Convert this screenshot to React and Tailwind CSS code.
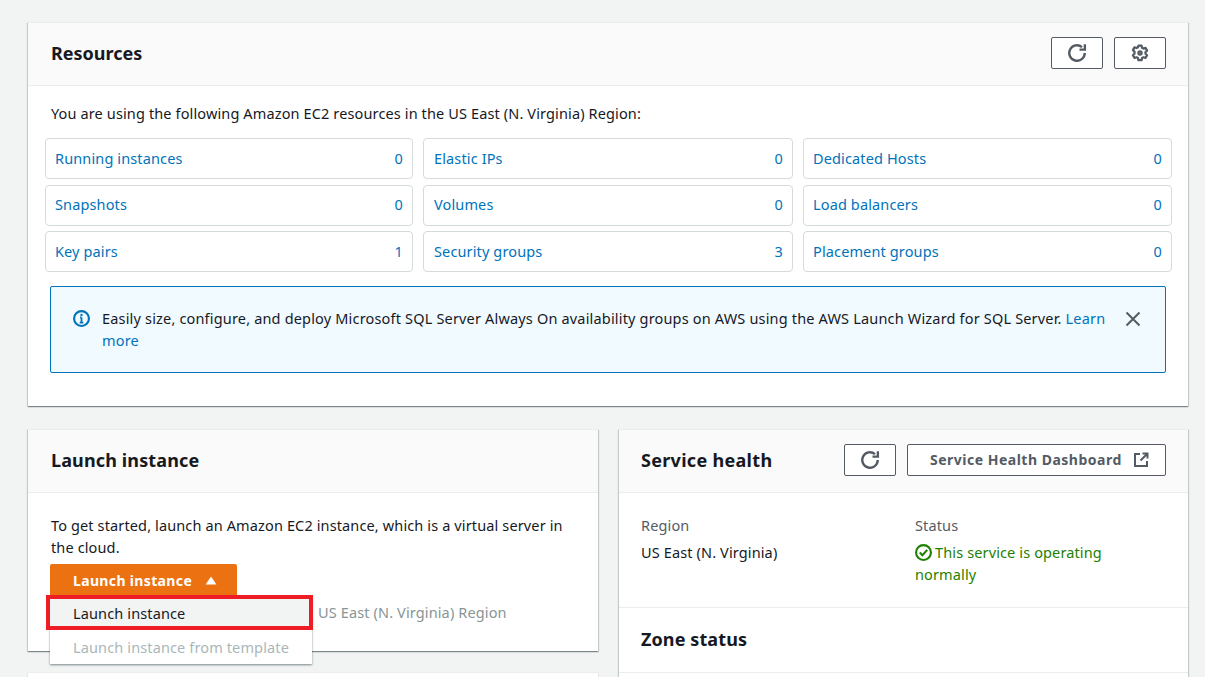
import React from "react";

const resources = [
  ["Running instances", 0],
  ["Elastic IPs", 0],
  ["Dedicated Hosts", 0],
  ["Snapshots", 0],
  ["Volumes", 0],
  ["Load balancers", 0],
  ["Key pairs", 1],
  ["Security groups", 3],
  ["Placement groups", 0],
];

const RefreshIcon = () => (
  <svg viewBox="0 0 16 16" className="w-[20px] h-[20px]" fill="none" stroke="#545b64" strokeWidth="1.9">
    <path d="M14.2 8a6.2 6.2 0 1 1-2.2-4.75" />
    <path d="M14.3 1v4.3H10" />
  </svg>
);

const GearIcon = () => (
  <svg viewBox="0 0 16 16" className="w-[18px] h-[18px]" fill="none" stroke="#545b64" strokeWidth="2" strokeLinejoin="round">
    <path d="M6.6 1.5h2.8l.4 1.9 1.3.7 1.8-.6 1.4 2.4-1.4 1.3v1.5l1.4 1.3-1.4 2.4-1.8-.6-1.3.7-.4 1.9H6.6l-.4-1.9-1.3-.7-1.8.6-1.4-2.4 1.4-1.3V6.7L1.7 5.4l1.4-2.4 1.8.6 1.3-.7z" />
    <circle cx="8" cy="8" r="1.4" />
  </svg>
);

const IconButton = ({ children }) => (
  <button className="w-[52px] h-[32px] flex items-center justify-center bg-white border border-[#545b64] rounded-[2px]">
    {children}
  </button>
);

const App = () => {
  return (
    <div
      className="h-[677px] overflow-hidden bg-[#f2f3f3] pt-[22px] pl-[28px] pr-[17px] text-[14.5px] tracking-[0.13px] leading-[22px] text-[#16191f]"
      style={{ fontFamily: '"Noto Sans", sans-serif' }}
    >
      {/* Resources */}
      <div className="h-[384px] bg-white border-t border-[#eaeded] shadow-[0_1px_1px_0_rgba(0,28,36,0.3),1px_1px_1px_0_rgba(0,28,36,0.15),-1px_1px_1px_0_rgba(0,28,36,0.15)]">
        <div className="h-[63px] bg-[#fafafa] border-b border-[#eaeded] flex items-center justify-between pl-[23px] pr-[22px] pb-[2px]">
          <h2 className="text-[18px] tracking-normal font-bold leading-[22px]">Resources</h2>
          <div className="flex gap-[11px]">
            <IconButton><RefreshIcon /></IconButton>
            <IconButton><GearIcon /></IconButton>
          </div>
        </div>
        <div className="pt-[16px]">
          <p className="pl-[23px]">You are using the following Amazon EC2 resources in the US East (N. Virginia) Region:</p>
          <div className="grid grid-cols-[368px_370px_369px] gap-x-[10px] gap-y-[5.5px] mt-[14px] ml-[17px]">
            {resources.map(([label, count], i) => (
              <div
                key={label}
                className={`h-[41px] bg-white border border-[#d5dbdb] rounded-[4px] flex items-center justify-between pr-[9px] pb-[2px] ${
                  i % 3 === 1 ? "pl-[10px]" : "pl-[9px]"
                }`}
              >
                <a className="text-[#0073bb]">{label}</a>
                <span className="text-[#0073bb]">{count}</span>
              </div>
            ))}
          </div>
          <div className="mt-[14px] ml-[22px] w-[1116px] h-[87px] bg-[#f1faff] border border-[#0073bb] rounded-[2px] flex pl-[22px] pt-[20px]">
            <svg viewBox="0 0 16 16" className="w-[17px] h-[17px] mt-[3px] shrink-0" fill="none">
              <circle cx="8" cy="8" r="7" stroke="#0073bb" strokeWidth="2" />
              <path d="M8 7v4.5M6.3 11.8h3.4M6.6 7h1.4" stroke="#0073bb" strokeWidth="1.7" />
              <circle cx="8" cy="4.6" r="1.1" fill="#0073bb" />
            </svg>
            <p className="ml-[12px] w-[1005px] shrink-0 tracking-[0.175px]">
              Easily size, configure, and deploy Microsoft SQL Server Always On availability groups on AWS using the AWS Launch Wizard for SQL Server.{" "}
              <a className="text-[#0073bb]">Learn more</a>
            </p>
            <svg viewBox="0 0 16 16" className="w-[16px] h-[16px] mt-[4px] ml-[18px] shrink-0" fill="none" stroke="#545b64" strokeWidth="2">
              <path d="M1.5 1.5l13 13M14.5 1.5l-13 13" />
            </svg>
          </div>
        </div>
      </div>

      <div className="grid grid-cols-[570px_569px] gap-x-[21px] mt-[23px]">
        <div>
          {/* Launch instance */}
          <div className="relative h-[222px] bg-white border-t border-[#eaeded] shadow-[0_1px_1px_0_rgba(0,28,36,0.3),1px_1px_1px_0_rgba(0,28,36,0.15),-1px_1px_1px_0_rgba(0,28,36,0.15)]">
            <div className="h-[63px] bg-[#fafafa] border-b border-[#eaeded] flex items-center pl-[23px] pb-[2px]">
              <h2 className="text-[18px] tracking-[0.13px] font-bold leading-[22px]">Launch instance</h2>
            </div>
            <div className="pt-[21px] px-[23px]">
              <p className="w-[530px]">To get started, launch an Amazon EC2 instance, which is a virtual server in the cloud.</p>
              <button className="mt-[6px] -ml-px w-[187px] h-[33px] bg-[#ec7211] rounded-[2px] text-white font-bold text-[14px] tracking-[0.35px] flex items-center pl-[23px] gap-[13px]">
                Launch instance
                <svg viewBox="0 0 12 10" className="w-[12px] h-[9px]" fill="#fff">
                  <path d="M6 0.5L12 9.5H0z" />
                </svg>
              </button>
              <p className="mt-[4px] ml-[267px] text-[#879596]">US East (N. Virginia) Region</p>
            </div>
            <div className="absolute left-[22px] top-[166px] w-[262px] bg-white shadow-[0_1px_2px_0_rgba(0,28,36,0.5)]">
              <div className="h-[34px] bg-[#f2f3f3] flex items-center pl-[23px]">Launch instance</div>
              <div className="h-[34px] flex items-center pl-[23px] text-[#aab7b8]">Launch instance from template</div>
            </div>
            {/* red highlight drawn over the screenshot */}
            <div className="absolute left-[18px] top-[165px] w-[267px] h-[35px] border-[4px] border-[#ee1c25]" />
          </div>
          <div className="mt-[21px] h-[40px] bg-white border-t border-[#eaeded] shadow-[0_1px_1px_0_rgba(0,28,36,0.3)]" />
        </div>

        {/* Service health */}
        <div className="h-[300px] bg-white border-t border-[#eaeded] shadow-[0_1px_1px_0_rgba(0,28,36,0.3),1px_1px_1px_0_rgba(0,28,36,0.15),-1px_1px_1px_0_rgba(0,28,36,0.15)]">
          <div className="h-[63px] bg-[#fafafa] border-b border-[#eaeded] flex items-center justify-between pl-[22px] pr-[22px] pb-[2px]">
            <h2 className="text-[18px] tracking-[0.3px] font-bold leading-[22px]">Service health</h2>
            <div className="flex gap-[11px]">
              <IconButton><RefreshIcon /></IconButton>
              <button className="w-[259px] h-[32px] bg-white border border-[#545b64] rounded-[2px] flex items-center pl-[22px] gap-[11px] text-[#545b64] font-bold text-[14px] tracking-[0.5px]">
                Service Health Dashboard
                <svg viewBox="0 0 16 16" className="w-[16px] h-[16px]" fill="none" stroke="#545b64" strokeWidth="2">
                  <path d="M7 2H2v12h12V9M9.5 1.5h5v5M14.5 1.5L7.5 8.5" />
                </svg>
              </button>
            </div>
          </div>
          <div className="grid grid-cols-[274px_1fr] pt-[21px] pl-[22px]">
            <div>
              <p className="text-[#545b64]">Region</p>
              <p className="mt-[5px]">US East (N. Virginia)</p>
            </div>
            <div>
              <p className="text-[#545b64]">Status</p>
              <p className="mt-[5px] w-[210px] text-[#1d8102]">
                <svg viewBox="0 0 16 16" className="inline w-[17px] h-[17px] mr-[3px] align-[-3px]" fill="none" stroke="#1d8102" strokeWidth="2">
                  <circle cx="8" cy="8" r="7" />
                  <path d="M4.5 8l2.5 2.5L11.5 5.5" />
                </svg>
                This service is operating normally
              </p>
            </div>
          </div>
          <div className="mt-[22px] border-t border-b border-[#eaeded] pt-[20px] pl-[22px] pb-[22px]">
            <h2 className="text-[18px] tracking-[0.1px] font-bold leading-[22px]">Zone status</h2>
          </div>
        </div>
      </div>
    </div>
  );
};

export default App;
